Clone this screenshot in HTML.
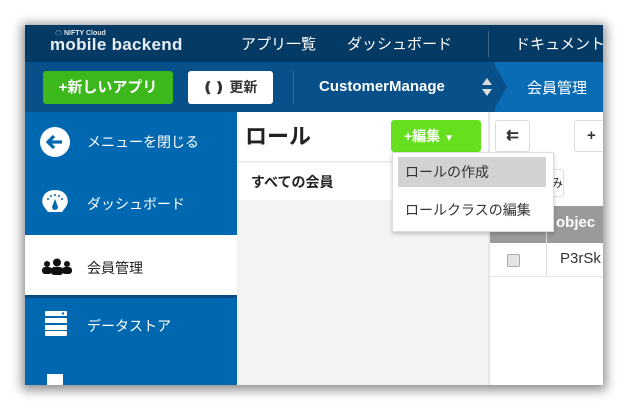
<!DOCTYPE html>
<html><head><meta charset="utf-8"><style>
*{margin:0;padding:0;box-sizing:border-box}
body{width:628px;height:410px;background:#fff;position:relative;overflow:hidden;font-family:"Liberation Sans","Noto Sans CJK JP",sans-serif}
.shot{position:absolute;left:25px;top:25px;width:578px;height:360px;overflow:hidden;background:#f3f3f3;box-shadow:0 2px 10px 3px rgba(0,0,0,.45)}
.a{position:absolute}
.top{left:0;top:0;width:578px;height:37px;background:#043a63;color:#fff}
.bar2{left:0;top:37px;width:578px;height:50px;background:#07508a}
.side{left:0;top:87px;width:212px;height:273px;background:#0068b1}
.t{position:absolute;white-space:nowrap}
</style></head><body>
<div class="shot">
 <div class="a top">
  <div class="t" style="left:30px;top:3px;font-size:7px;font-weight:bold;color:#dfe8f0">☁ NIFTY Cloud</div>
  <div class="t" style="left:25px;top:10px;font-size:17px;font-weight:bold;color:#e8eef4;letter-spacing:0.3px">mobile backend</div>
  <div class="t" style="left:216px;top:8px;font-size:15px">アプリ一覧</div>
  <div class="t" style="left:322px;top:8px;font-size:15px">ダッシュボード</div>
  <div class="a" style="left:463px;top:6px;width:1px;height:26px;background:#3c6388"></div>
  <div class="t" style="left:490px;top:8px;font-size:15px">ドキュメント</div>
 </div>
 <div class="a bar2">
  <div class="a" style="left:470px;top:0;width:108px;height:50px;background:#0a6cb5"></div>
  <svg class="a" style="left:468px;top:0" width="16" height="50"><polygon points="0,0 14,25 0,50" fill="#07508a"/></svg>
  <div class="a" style="left:18px;top:9px;width:130px;height:33px;background:#3cb81d;border-radius:3px;color:#fff;font-weight:bold;font-size:15px;text-align:center;line-height:33px">+新しいアプリ</div>
  <div class="a" style="left:163px;top:9px;width:85px;height:33px;background:#fff;border-radius:3px;color:#333;font-weight:bold;font-size:14px;line-height:33px;padding-left:14px">❪❫ 更新</div>
  <div class="a" style="left:268px;top:8px;width:1px;height:34px;background:#2e6b9c"></div>
  <div class="t" style="left:294px;top:16px;font-size:15px;font-weight:bold;color:#fff">CustomerManage</div>
  <svg class="a" style="left:456px;top:15px" width="12" height="20"><polygon points="6,1 11,8 1,8" fill="#ddd"/><polygon points="6,19 11,12 1,12" fill="#ddd"/></svg>
  <div class="t" style="left:502px;top:15px;font-size:15px;color:#fff">会員管理</div>
 </div>
 <div class="a side">
  <svg class="a" style="left:14px;top:14px" width="32" height="32"><circle cx="16" cy="16" r="15" fill="#fff"/><path d="M23 16H10M15 10l-6 6 6 6" stroke="#0068b1" stroke-width="3.2" fill="none"/></svg>
  <div class="t" style="left:62px;top:20px;font-size:14px;color:#fff">メニューを閉じる</div>
  <svg class="a" style="left:16px;top:76px" width="28" height="26"><path d="M14 2A12 11 0 0 0 4 20l3 4h14l3-4A12 11 0 0 0 14 2z" fill="#fff"/><g fill="#0068b1"><circle cx="7" cy="11" r="1"/><circle cx="10" cy="8" r="1"/><circle cx="14" cy="7" r="1"/><circle cx="18" cy="8" r="1"/><circle cx="21" cy="11" r="1"/><path d="M14 11l-3 8a3 3 0 0 0 6 0z"/></g></svg>
  <div class="t" style="left:62px;top:82px;font-size:14px;color:#fff">ダッシュボード</div>
  <div class="a" style="left:0;top:123px;width:212px;height:63px;background:#fff;border-bottom:3px solid #0a4c80"></div>
  <svg class="a" style="left:16px;top:146px" width="32" height="18"><g fill="#111"><circle cx="6" cy="6" r="3"/><rect x="1" y="9" width="10" height="7" rx="3"/><circle cx="16" cy="4.5" r="4"/><rect x="10" y="9" width="12" height="8" rx="3"/><circle cx="26" cy="6" r="3"/><rect x="21" y="9" width="10" height="7" rx="3"/></g></svg>
  <div class="t" style="left:62px;top:146px;font-size:14px;color:#222">会員管理</div>
  <svg class="a" style="left:20px;top:199px" width="22" height="25"><g fill="#fff"><rect width="22" height="5" rx="1"/><rect y="7" width="22" height="5"/><rect y="14" width="22" height="5"/><rect y="20" width="22" height="5" rx="1"/></g><circle cx="18" cy="2.5" r="1.2" fill="#0068b1"/></svg>
  <div class="t" style="left:62px;top:204px;font-size:14px;color:#fff">データストア</div>
  <div class="a" style="left:22px;top:262px;width:16px;height:12px;background:#fff"></div>
 </div>
 <div class="a" style="left:212px;top:87px;width:251px;height:273px;background:#f3f3f3">
  <div class="a" style="left:0;top:0;width:251px;height:50px;background:#fff;border-bottom:1px solid #e4e4e4"></div>
  <div class="t" style="left:8px;top:7px;font-size:22px;font-weight:bold;color:#222">ロール</div>
  <div class="a" style="left:154px;top:8px;width:90px;height:32px;background:#66e01e;border-radius:3px;color:#fff;font-weight:bold;font-size:14px;line-height:32px;padding-left:13px">+編集 <span style="font-size:10px">▼</span></div>
  <div class="a" style="left:0;top:51px;width:251px;height:37px;background:#fff"></div>
  <div class="t" style="left:14px;top:60px;font-size:14px;font-weight:bold;color:#222">すべての会員</div>
 </div>
 <div class="a" style="left:463px;top:87px;width:115px;height:273px;background:#fff;border-left:2px solid #e6e6e6">
  <div class="a" style="left:5px;top:8px;width:35px;height:32px;border:1px solid #ddd;border-radius:3px;font-weight:bold;font-size:15px;text-align:center;line-height:30px;color:#333">⇇</div>
  <div class="a" style="left:84px;top:8px;width:40px;height:32px;border:1px solid #ddd;border-radius:3px;font-weight:bold;font-size:15px;line-height:30px;padding-left:12px;color:#333">+</div>
  <div class="a" style="left:40px;top:57px;width:34px;height:28px;border:1px solid #ddd;border-radius:3px;font-size:12px;line-height:26px;padding-left:8px;color:#333">込み</div>
  <div class="a" style="left:0;top:94px;width:115px;height:37px;background:#9a9a9a"></div>
  <div class="a" style="left:56px;top:94px;width:1px;height:70px;background:#ddd"></div>
  <div class="t" style="left:66px;top:102px;font-size:15px;font-weight:bold;color:#fff">objec</div>
  <div class="a" style="left:0;top:164px;width:115px;height:1px;background:#e4e4e4"></div>
  <div class="a" style="left:17px;top:142px;width:13px;height:13px;border:1px solid #aaa;border-radius:2px;background:#e4e4e4"></div>
  <div class="t" style="left:70px;top:138px;font-size:15px;color:#333">P3rSk</div>
 </div>
 <div class="a" style="left:367px;top:127px;width:162px;height:80px;background:#fff;border:1px solid #ddd;box-shadow:0 2px 4px rgba(0,0,0,.2)">
  <div class="a" style="left:5px;top:4px;width:148px;height:30px;background:#d2d2d2"></div>
  <div class="t" style="left:12px;top:9px;font-size:14px;color:#333">ロールの作成</div>
  <div class="t" style="left:12px;top:47px;font-size:14px;color:#333">ロールクラスの編集</div>
 </div>
</div>
</body></html>
